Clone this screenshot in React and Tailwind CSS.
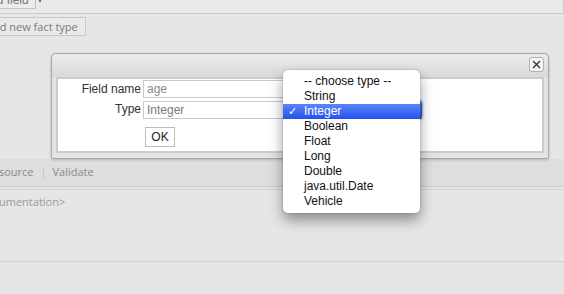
import React from 'react';

const types = ['-- choose type --', 'String', 'Integer', 'Boolean', 'Float', 'Long', 'Double', 'java.util.Date', 'Vehicle'];

const App = () => {
    const selected = 'Integer';

    return (
        <div className="relative w-[564px] h-[294px] overflow-hidden bg-[#e6e6e6] font-['Liberation_Sans',Arial,sans-serif] text-[12px]">
            {/* top toolbar */}
            <div className="relative h-[14px] bg-[#e9e9e9] border-b border-r border-[#cacaca] overflow-hidden">
                <div className="flex items-start">
                    <button className="-ml-[25px] -mt-[9px] h-[18px] px-[6px] border border-[#c2c2c2] bg-[#ececec] text-[#777] leading-[16px]">
                        Add field
                    </button>
                    <span className="ml-[3px] w-[2px] h-[2px] bg-[#4a6fd0]" />
                </div>
            </div>

            <div className="mt-[3px] flex">
                <button className="-ml-[22px] h-[19px] px-[7px] border border-[#c8c8c8] bg-[#e9e9e9] text-[#7a7a7a] leading-[17px] font-['Open_Sans',sans-serif] text-[11px]">
                    Add new fact type
                </button>
            </div>

            <div className="h-[123px]" />

            {/* source strip */}
            <div className="h-[28px] bg-[#dedede] border-b border-[#cbcbcb] flex items-center text-[#8a8a8a] font-['Open_Sans',sans-serif] text-[11px]">
                <span className="-ml-[1px]">source</span>
                <span className="ml-[9px] w-px h-[12px] bg-[#c6c6c6]" />
                <span className="ml-[9px]">Validate</span>
            </div>
            <div className="mt-[2px] h-[73px] border-t border-b border-[#d2d2d2] text-[#9a9a9a] font-['Open_Sans',sans-serif] text-[11px] leading-[14px] pt-[5px]">
                <span className="-ml-[1px]">umentation&gt;</span>
            </div>

            {/* dialog */}
            <div className="absolute left-[51px] top-[53px] w-[498px] h-[106px] border border-[#a9a9a9] rounded-t-[5px] rounded-b-[2px] bg-[#e3e3e3] shadow-[0_1px_3px_rgba(0,0,0,0.2)]">
                <div className="h-[23px] rounded-t-[5px] bg-gradient-to-b from-[#ececec] to-[#d9d9d9] flex justify-end items-start pr-[4px] pt-[3px]">
                    <button className="w-[15px] h-[15px] rounded-[3px] border border-[#b0b0b0] bg-[#f5f5f5] flex items-center justify-center">
                        <svg width="9" height="9" viewBox="0 0 9 9">
                            <path d="M1 1 L8 8 M8 1 L1 8" stroke="#333" strokeWidth="1.4" />
                        </svg>
                    </button>
                </div>
                <div className="px-[4px] pb-[5px]">
                    <div className="h-[76px] bg-white border-2 border-[#cbcbcb] pt-[1px]">
                        <div className="grid grid-cols-[83px_279px] gap-x-[2px] gap-y-[3px] items-center">
                            <span className="text-right text-[#333] -mt-[1px]">Field name</span>
                            <div className="h-[18px] w-[276px] border border-[#c9c9c9] bg-white px-[3px] text-[#8a8a8a] leading-[16px]">age</div>
                            <span className="text-right text-[#333] -mt-[2px]">Type</span>
                            <div className="relative h-[18px] border border-[#c9c9c9] bg-white px-[3px] text-[#7a7a7a] leading-[16px]">
                                Integer
                                <span className="absolute -right-[1px] -top-[2px] w-[18px] h-[20px] rounded-r-[4px] border border-[#3a5fa8] bg-gradient-to-b from-[#6a95f2] to-[#2c57d8] shadow-[0_0_2px_1px_rgba(80,130,230,0.6)]" />
                            </div>
                            <span />
                            <div className="mt-[5px] ml-[2px]">
                                <button className="w-[30px] h-[20px] border border-[#bdbdbd] bg-white text-[#222] leading-[18px]">OK</button>
                            </div>
                        </div>
                    </div>
                </div>
            </div>

            {/* open type menu */}
            <div className="absolute left-[283px] top-[70px] w-[137px] h-[143px] bg-white rounded-[5px] pt-[4px] shadow-[0_7px_14px_rgba(0,0,0,0.4),0_0_2px_rgba(0,0,0,0.25)] text-[#111]">
                {types.map((t) => (
                    <div
                        key={t}
                        className={`relative h-[15px] leading-[15px] pl-[21px] ${t === selected ? 'bg-gradient-to-b from-[#5d84f7] to-[#2550ee] text-white' : ''}`}
                    >
                        {t === selected && (
                            <span className="absolute left-[5px] top-0 font-['DejaVu_Sans',sans-serif] text-[11px]">✓</span>
                        )}
                        {t}
                    </div>
                ))}
            </div>
        </div>
    );
};

export default App;
